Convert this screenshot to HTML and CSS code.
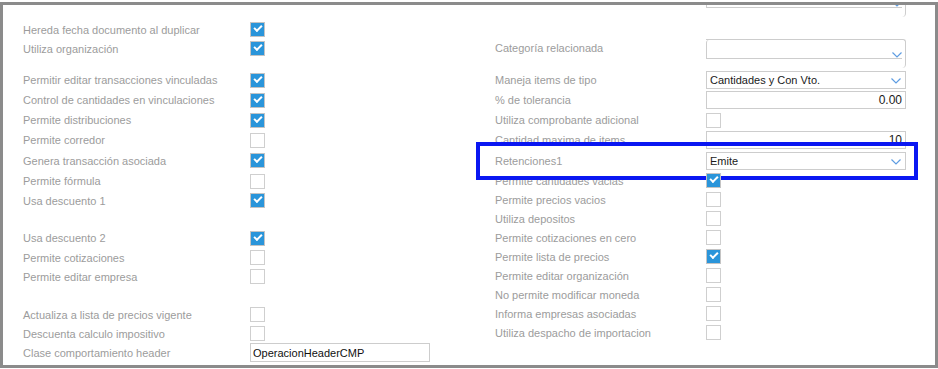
FILE: index.html
```html
<!DOCTYPE html>
<html lang="es">
<head>
    <meta charset="UTF-8">
    <meta name="viewport" content="width=device-width, initial-scale=1.0">
    <title>Configuración de operación</title>
    <link rel="stylesheet" href="styles.css">
</head>
<body>
    <div class="frame">
        <div class="form">

            <!-- Columna izquierda -->
            <div class="col col-left">
                <div class="row h19"><span class="label">Hereda fecha documento al duplicar</span><span class="check on"></span></div>
                <div class="row h19"><span class="label">Utiliza organización</span><span class="check on"></span></div>

                <div class="row mt12"><span class="label">Permitir editar transacciones vinculadas</span><span class="check on"></span></div>
                <div class="row"><span class="label">Control de cantidades en vinculaciones</span><span class="check on"></span></div>
                <div class="row"><span class="label">Permite distribuciones</span><span class="check on"></span></div>
                <div class="row"><span class="label">Permite corredor</span><span class="check"></span></div>
                <div class="row h21"><span class="label">Genera transacción asociada</span><span class="check on"></span></div>
                <div class="row"><span class="label">Permite fórmula</span><span class="check"></span></div>
                <div class="row h19"><span class="label">Usa descuento 1</span><span class="check on"></span></div>

                <div class="row mt18"><span class="label">Usa descuento 2</span><span class="check on"></span></div>
                <div class="row h19"><span class="label">Permite cotizaciones</span><span class="check"></span></div>
                <div class="row h19"><span class="label">Permite editar empresa</span><span class="check"></span></div>

                <div class="row h19 mt19"><span class="label">Actualiza a lista de precios vigente</span><span class="check"></span></div>
                <div class="row h19"><span class="label">Descuenta calculo impositivo</span><span class="check"></span></div>
                <div class="row h19"><span class="label">Clase comportamiento header</span><span class="field text-field">OperacionHeaderCMP</span></div>
            </div>

            <!-- Columna derecha -->
            <div class="col col-right">
                <div class="row tall cut"><span class="label"></span>
                    <div class="combo">
                        <div class="combo-field"><svg class="chevron" width="10" height="6" viewBox="0 0 10 6"><polyline points="0.5,0.5 5,5 9.5,0.5"/></svg></div>
                    </div>
                </div>

                <div class="row tall mt20"><span class="label">Categoría relacionada</span>
                    <div class="combo">
                        <div class="combo-field"><svg class="chevron" width="10" height="6" viewBox="0 0 10 6"><polyline points="0.5,0.5 5,5 9.5,0.5"/></svg></div>
                    </div>
                </div>
                <div class="row"><span class="label">Maneja items de tipo</span>
                    <div class="field select">Cantidades y Con Vto.<svg class="chevron" width="10" height="6" viewBox="0 0 10 6"><polyline points="0.5,0.5 5,5 9.5,0.5"/></svg></div>
                </div>
                <div class="row"><span class="label">% de tolerancia</span><div class="field number">0.00</div></div>
                <div class="row"><span class="label">Utiliza comprobante adicional</span><span class="check"></span></div>
                <div class="row"><span class="label">Cantidad maxima de items</span><div class="field number">10</div></div>
                <div class="row h21 marked"><span class="label">Retenciones1</span>
                    <div class="field select">Emite<svg class="chevron" width="10" height="6" viewBox="0 0 10 6"><polyline points="0.5,0.5 5,5 9.5,0.5"/></svg></div>
                    <span class="highlight"></span>
                </div>
                <div class="row h19"><span class="label">Permite cantidades vacias</span><span class="check on"></span></div>
                <div class="row h19"><span class="label">Permite precios vacios</span><span class="check"></span></div>
                <div class="row h19"><span class="label">Utiliza depositos</span><span class="check"></span></div>
                <div class="row h19"><span class="label">Permite cotizaciones en cero</span><span class="check"></span></div>
                <div class="row h19"><span class="label">Permite lista de precios</span><span class="check on"></span></div>
                <div class="row h19"><span class="label">Permite editar organización</span><span class="check"></span></div>
                <div class="row h19"><span class="label">No permite modificar moneda</span><span class="check"></span></div>
                <div class="row h19"><span class="label">Informa empresas asociadas</span><span class="check"></span></div>
                <div class="row h19"><span class="label">Utiliza despacho de importacion</span><span class="check"></span></div>
            </div>

        </div>
    </div>
</body>
</html>
```

FILE: styles.css
```css
body {
    margin: 0;
    background-color: #fff;
    font-family: 'Liberation Sans', Arial, sans-serif;
    font-size: 11px;
    color: #9c9c9c; /* labels are light gray */
}

.frame {
    margin-top: 2px;
    height: 366px;
    box-sizing: border-box;
    border: 3px solid #8b8b8b;
    overflow: hidden;
}

.form {
    display: flex;
    padding-left: 20px;
}

.col {
    display: flex;
    flex-direction: column;
}

.col-left {
    width: 472px;
    padding-top: 15px;
}

.col-right {
    width: 411px;
}

.row {
    display: flex;
    align-items: center;
    height: 20px;
}

.row.h19 { height: 19px; }
.row.h21 { height: 21px; }

.row.tall {
    height: 31px;
    align-items: flex-start;
}

.row.tall .label {
    line-height: 18px;
}

.row.cut {
    margin-top: -17px;
}

.mt12 { margin-top: 12px; }
.mt18 { margin-top: 18px; }
.mt19 { margin-top: 19px; }
.mt20 { margin-top: 20px; }

.col-left .label {
    width: 227px;
    flex-shrink: 0;
}

.col-right .label {
    width: 211px;
    flex-shrink: 0;
}

/* checkboxes */
.check {
    position: relative;
    width: 15px;
    height: 15px;
    box-sizing: border-box;
    border: 1px solid #cfcfcf;
    background-color: #fff;
}

.check.on {
    background-color: #2a95da;
    border-color: #c4c4c4;
}

.check.on::after {
    content: "";
    position: absolute;
    left: 3px;
    top: 2px;
    width: 6px;
    height: 3px;
    border-left: 2px solid #fff;
    border-bottom: 2px solid #fff;
    transform: rotate(-45deg);
}

/* inputs */
.field {
    position: relative;
    display: flex;
    align-items: center;
    width: 200px;
    height: 18px;
    box-sizing: border-box;
    border: 1px solid #cdcdcd;
    padding: 0 3px;
    color: #1a1a1a;
    font-size: 12px;
    background-color: #fff;
}

.text-field {
    width: 180px;
    height: 19px;
    padding-left: 2px;
    font-size: 11px;
    color: #111;
}

.field.number {
    justify-content: flex-end;
}

.field.select {
    font-size: 11px;
}

.chevron {
    position: absolute;
    right: 4px;
    top: 6px;
}

.chevron polyline {
    fill: none;
    stroke: #5e9de2;
    stroke-width: 1.2;
}

/* tall combo (multi line select) */
.combo {
    display: flex;
    width: 200px;
    height: 29px;
    box-sizing: border-box;
    border-top: 1px solid #cdcdcd;
    border-right: 1px solid #cdcdcd;
    border-radius: 0 3px 4px 0;
}

.combo-field {
    position: relative;
    width: 195px;
    height: 18px;
    border-left: 1px solid #cdcdcd;
    border-bottom: 1px solid #cdcdcd;
    border-top-left-radius: 3px;
}

.combo-field .chevron {
    right: 0;
    top: 12px;
}

/* marked row */
.marked {
    position: relative;
}

.highlight {
    position: absolute;
    left: -19px;
    top: -8px;
    right: -12px;
    bottom: -9px;
    border: 4px solid #0a17f2;
}
```
